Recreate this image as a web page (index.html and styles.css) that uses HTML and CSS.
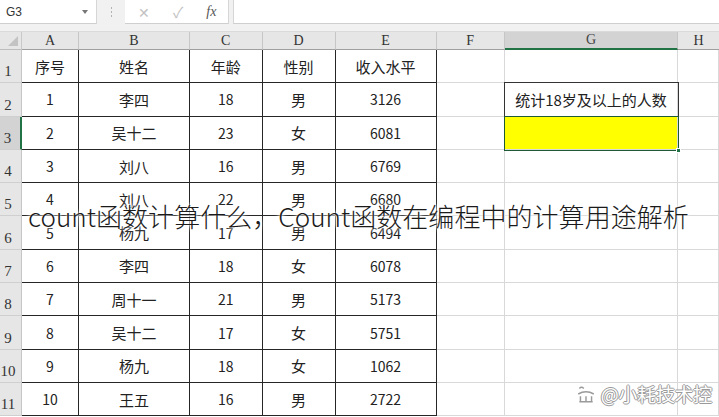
FILE: index.html
```html
<!DOCTYPE html>
<html lang="zh">
<head>
<meta charset="utf-8">
<title>count函数</title>
<link rel="stylesheet" href="styles.css">
</head>
<body>
<div class="page">
  <div class="toolbar">
    <div class="namebox"><span class="ref">G3</span><span class="drop"></span></div>
    <div class="grip"><i></i><i></i><i></i></div>
    <div class="btns">
      <span class="btn x">✕</span>
      <span class="btn ok">✓</span>
      <span class="btn fx">fx</span>
    </div>
    <div class="formula"></div>
  </div>
  <div class="sheet">
    <div class="corner"><span class="tri"></span></div>
    <div class="ch">A</div><div class="ch">B</div><div class="ch">C</div><div class="ch">D</div><div class="ch">E</div><div class="ch">F</div><div class="ch sel">G</div><div class="ch last">H</div>

    <div class="rh">1</div>
    <div class="c t">序号</div><div class="c t">姓名</div><div class="c t">年龄</div><div class="c t">性别</div><div class="c t">收入水平</div><div class="c"></div><div class="c"></div><div class="c"></div>

    <div class="rh">2</div>
    <div class="c t num">1</div><div class="c t">李四</div><div class="c t num">18</div><div class="c t">男</div><div class="c t num">3126</div><div class="c"></div><div class="c g2">统计18岁及以上的人数</div><div class="c"></div>

    <div class="rh sel">3</div>
    <div class="c t num">2</div><div class="c t">吴十二</div><div class="c t num">23</div><div class="c t">女</div><div class="c t num">6081</div><div class="c"></div><div class="c g3"><span class="handle"></span></div><div class="c"></div>

    <div class="rh">4</div>
    <div class="c t num">3</div><div class="c t">刘八</div><div class="c t num">16</div><div class="c t">男</div><div class="c t num">6769</div><div class="c"></div><div class="c"></div><div class="c"></div>

    <div class="rh">5</div>
    <div class="c t num">4</div><div class="c t">刘八</div><div class="c t num">22</div><div class="c t">男</div><div class="c t num">6680</div><div class="c"></div><div class="c"></div><div class="c"></div>

    <div class="rh">6</div>
    <div class="c t num">5</div><div class="c t">杨九</div><div class="c t num">17</div><div class="c t">男</div><div class="c t num">6494</div><div class="c"></div><div class="c"></div><div class="c"></div>

    <div class="rh">7</div>
    <div class="c t num">6</div><div class="c t">李四</div><div class="c t num">18</div><div class="c t">女</div><div class="c t num">6078</div><div class="c"></div><div class="c"></div><div class="c"></div>

    <div class="rh">8</div>
    <div class="c t num">7</div><div class="c t">周十一</div><div class="c t num">21</div><div class="c t">男</div><div class="c t num">5173</div><div class="c"></div><div class="c"></div><div class="c"></div>

    <div class="rh">9</div>
    <div class="c t num">8</div><div class="c t">吴十二</div><div class="c t num">17</div><div class="c t">女</div><div class="c t num">5751</div><div class="c"></div><div class="c"></div><div class="c"></div>

    <div class="rh">10</div>
    <div class="c t num">9</div><div class="c t">杨九</div><div class="c t num">18</div><div class="c t">女</div><div class="c t num">1062</div><div class="c"></div><div class="c"></div><div class="c"></div>

    <div class="rh">11</div>
    <div class="c t num">10</div><div class="c t">王五</div><div class="c t num">16</div><div class="c t">男</div><div class="c t num">2722</div><div class="c"></div><div class="c"></div><div class="c"></div>
  </div>

  <div class="headline">count函数计算什么，Count函数在编程中的计算用途解析</div>
  <div class="watermark">
    <svg class="wm-logo" width="20" height="20" viewBox="0 0 18 18"><path d="M3 4 Q5 2 7 4 M2 9 Q9 5 16 9 M4 11 L4 16 M9 11 L9 16 M14 11 L14 16 M3 16 L15 16" fill="none" stroke="#9a9a9a" stroke-width="1.3"/></svg>
    <span class="wm-text">@小耗技术控</span>
  </div>
</div>
</body>
</html>
```

FILE: styles.css
```css
* { box-sizing: border-box; }
html, body { margin: 0; padding: 0; background: #fff; }
.page {
  position: relative;
  width: 719px;
  height: 417px;
  overflow: hidden;
  font-family: "Noto Sans CJK SC", "Noto Sans", sans-serif;
}

/* formula bar */
.toolbar {
  height: 32px;
  background: #f1f1f1;
  display: flex;
  align-items: flex-start;
  border-bottom: 1px solid #dadada;
}
.namebox {
  width: 97px;
  height: 24px;
  background: #fff;
  border-right: 1px solid #d6d6d6;
  border-bottom: 1px solid #cfcfcf;
  display: flex;
  align-items: center;
  justify-content: space-between;
  padding: 0 8px 0 6px;
}
.ref { font-family: "Liberation Sans", Arial, sans-serif; font-size: 12px; color: #333; }
.drop {
  width: 0; height: 0;
  border-left: 3.5px solid transparent;
  border-right: 3.5px solid transparent;
  border-top: 4px solid #777;
}
.grip {
  width: 28px;
  height: 24px;
  display: flex;
  flex-direction: column;
  align-items: center;
  justify-content: center;
  gap: 2px;
}
.grip i { width: 1px; height: 2px; background: #b3b3b3; display: block; }
.btns {
  width: 104px;
  height: 24px;
  background: #fff;
  border-bottom: 1px solid #cfcfcf;
  border-right: 1px solid #d6d6d6;
  display: flex;
  align-items: center;
  padding-left: 13px;
  gap: 23px;
}
.btn { font-size: 14px; color: #c2c2c2; line-height: 1; }
.btn.ok { color: #c2c2c2; font-size: 15px; }
.btn.fx { font-family: "Liberation Serif", serif; font-style: italic; color: #555; font-size: 14px; }
.formula {
  flex: 1;
  margin-left: 4px;
  height: 24px;
  background: #fff;
  border-bottom: 1px solid #cfcfcf;
  border-left: 1px solid #d6d6d6;
}

/* sheet grid */
.sheet {
  display: grid;
  grid-template-columns: 22px 57px 111px 72.5px 73px 101px 68.5px 173px 41px;
  grid-template-rows: 18px repeat(11, 33.3px);
}
.corner {
  background: #e6e6e6;
  border-right: 1px solid #c9c9c9;
  border-bottom: 1px solid #bdbdbd;
  position: relative;
}
.tri {
  position: absolute;
  right: 3px;
  bottom: 3px;
  width: 0; height: 0;
  border-left: 10px solid transparent;
  border-bottom: 10px solid #c3c3c3;
}
.ch {
  background: #e6e6e6;
  border-right: 1px solid #c6c6c6;
  border-bottom: 1px solid #9f9f9f;
  font-family: "Liberation Serif", "Times New Roman", serif;
  font-size: 14px;
  color: #333;
  display: flex;
  align-items: center;
  justify-content: center;
}
.ch.sel {
  background: #d3d3d3;
  border-bottom: 2px solid #217346;
  color: #444;
}
.ch.last { border-right: none; }
.rh {
  background: #e6e6e6;
  border-right: 1px solid #c6c6c6;
  border-bottom: 1px solid #cfcfcf;
  font-family: "Liberation Serif", "Times New Roman", serif;
  font-size: 15px;
  color: #333;
  display: flex;
  align-items: flex-end;
  justify-content: center;
  padding: 0 5px 2px 0;
}
.rh.sel {
  background: #d3d3d3;
  border-right: 2px solid #217346;
}
.c {
  border-right: 1px solid #d9d9d9;
  border-bottom: 1px solid #d9d9d9;
  display: flex;
  align-items: center;
  justify-content: center;
  font-size: 15px;
  color: #222;
  position: relative;
}
.c.t {
  border-right: 1.5px solid #262626;
  border-bottom: 1.5px solid #262626;
}
.c.num { font-size: 14px; }
.g2 {
  outline: 1.5px solid #333;
  font-size: 15px;
  z-index: 1;
}
.g3 {
  background: #ffff00;
  outline: 1.5px solid #1f5a36;
  z-index: 2;
}
.handle {
  position: absolute;
  right: -4px;
  bottom: -4px;
  width: 5px;
  height: 5px;
  background: #217346;
  border: 1px solid #fff;
}

/* overlay title */
.headline {
  position: absolute;
  left: 28px;
  top: 200px;
  font-size: 26px;
  line-height: 1.2;
  font-weight: 300;
  color: #1a1a1a;
  white-space: nowrap;
  letter-spacing: 0.05px;
  text-shadow: 0 0 2px #fff, 0 0 4px #fff, 0 0 6px rgba(255,255,255,0.9);
  z-index: 5;
}

/* watermark */
.watermark {
  position: absolute;
  right: 7px;
  bottom: 10px;
  display: flex;
  align-items: center;
  gap: 5px;
  z-index: 5;
}
.wm-text {
  font-size: 19px;
  color: #fff;
  text-shadow: 1px 0 0 #9a9a9a, -1px 0 0 #9a9a9a, 0 1px 0 #9a9a9a, 0 -1px 0 #9a9a9a;
  letter-spacing: -0.3px;
}
```
